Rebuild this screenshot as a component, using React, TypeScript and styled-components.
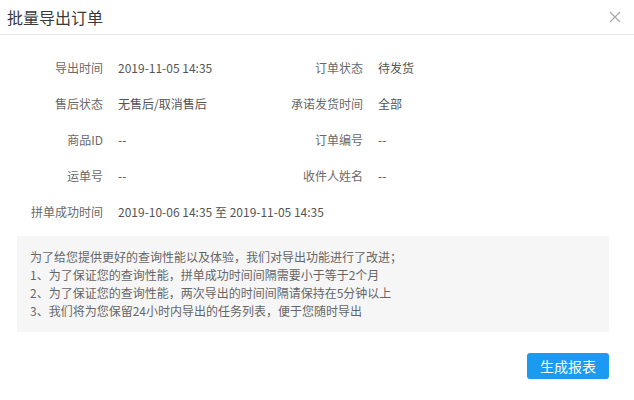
import styled, { createGlobalStyle } from 'styled-components';

const GlobalStyle = createGlobalStyle`
    html, body {
        margin: 0;
        padding: 0;
        background: #fff;
    }
    body {
        font-family: "Noto Sans CJK SC", "Noto Sans", sans-serif;
        color: #333;
    }
`;

interface IField {
    label: string;
    value: string;
    wide?: boolean;
}

const fields: IField[] = [
    { label: "导出时间", value: "2019-11-05 14:35" },
    { label: "订单状态", value: "待发货" },
    { label: "售后状态", value: "无售后/取消售后" },
    { label: "承诺发货时间", value: "全部" },
    { label: "商品ID", value: "--" },
    { label: "订单编号", value: "--" },
    { label: "运单号", value: "--" },
    { label: "收件人姓名", value: "--" },
    { label: "拼单成功时间", value: "2019-10-06 14:35 至 2019-11-05 14:35", wide: true },
];

const notes = [
    "为了给您提供更好的查询性能以及体验，我们对导出功能进行了改进；",
    "1、为了保证您的查询性能，拼单成功时间间隔需要小于等于2个月",
    "2、为了保证您的查询性能，两次导出的时间间隔请保持在5分钟以上",
    "3、我们将为您保留24小时内导出的任务列表，便于您随时导出",
];

function App() {
    return (
        <>
            <GlobalStyle />
            <Dialog>
                <Header>
                    <Title>批量导出订单</Title>
                    <CloseButton aria-label="close">
                        <svg width="12" height="12" viewBox="0 0 12 12">
                            <path d="M1 1 L11 11 M11 1 L1 11" stroke="#a8a8a8" strokeWidth="1.2" fill="none" />
                        </svg>
                    </CloseButton>
                </Header>
                <Body>
                    <FieldGrid>
                        {fields.map(f => (
                            <Field key={f.label} $wide={f.wide}>
                                <Label>{f.label}</Label>
                                <Value>{f.value}</Value>
                            </Field>
                        ))}
                    </FieldGrid>
                    <Notice>
                        {notes.map(n => <NoticeLine key={n}>{n}</NoticeLine>)}
                    </Notice>
                    <Footer>
                        <PrimaryButton>生成报表</PrimaryButton>
                    </Footer>
                </Body>
            </Dialog>
        </>
    );
}

export default App;

const Dialog = styled.div`
    width: 634px;
    height: 400px;
    background: #fff;
    overflow: hidden;
`

const Header = styled.div`
    height: 34px;
    border-bottom: 1px solid #e6e6e6;
    display: flex;
    align-items: center;
    justify-content: space-between;
    padding: 0 12px 0 7px;
`

const Title = styled.h3`
    margin: 0;
    font-size: 16px;
    font-weight: 400;
    color: #3a3a3a;
    line-height: 30px;
`

const CloseButton = styled.button`
    border: 0;
    background: none;
    padding: 0;
    width: 14px;
    height: 14px;
    display: flex;
    align-items: center;
    justify-content: center;
    cursor: pointer;
`

const Body = styled.div`
    padding: 14px 25px 0 17px;
`

const FieldGrid = styled.div`
    display: grid;
    grid-template-columns: 260px 1fr;
`

const Field = styled.div<{ $wide?: boolean }>`
    display: flex;
    align-items: center;
    height: 36px;
    font-size: 12px;
    grid-column: ${p => p.$wide ? "1 / span 2" : "auto"};
`

const Label = styled.span`
    width: 86px;
    text-align: right;
    color: #6a6a6a;
    margin-right: 15px;
    white-space: nowrap;
`

const Value = styled.span`
    color: #555;
    white-space: nowrap;
`

const Notice = styled.div`
    margin-top: 7px;
    background: #f6f6f6;
    padding: 12px 13px;
    font-size: 12px;
    color: #666;
`

const NoticeLine = styled.p`
    margin: 0;
    line-height: 18px;
`

const Footer = styled.div`
    display: flex;
    justify-content: flex-end;
    padding-top: 21px;
`

const PrimaryButton = styled.button`
    width: 82px;
    height: 26px;
    border: 0;
    border-radius: 3px;
    background: #1a9bf0;
    color: #fff;
    font-family: "Noto Sans CJK SC", sans-serif;
    font-size: 14px;
    padding: 0;
    cursor: pointer;
`
